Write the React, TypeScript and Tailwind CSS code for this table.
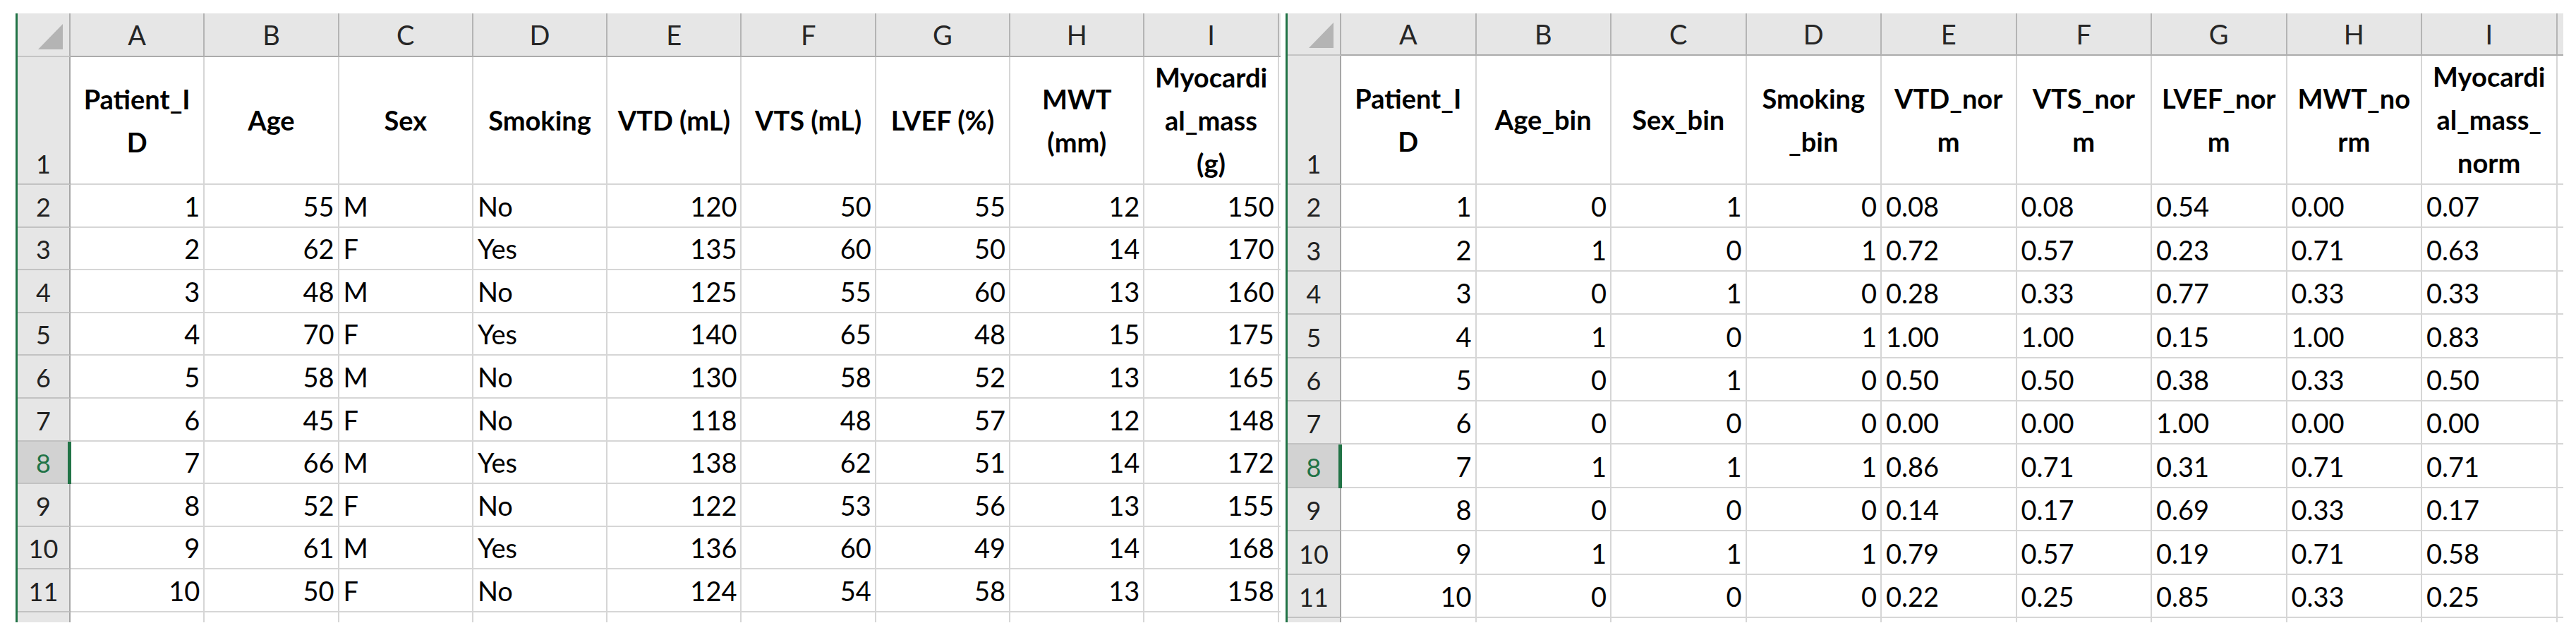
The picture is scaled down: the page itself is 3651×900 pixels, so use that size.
import React from "react";

type Align = "l" | "r";

interface PanelCfg {
  letters: string[];
  headers: string[][];
  aligns: Align[];
  rows: string[][];
  panelClass: string;
  rhW: string;
  colW: string;
  headH: string;
  row1H: string;
  rowH: string;
}

const letters = ["A", "B", "C", "D", "E", "F", "G", "H", "I"];

const leftRows: string[][] = [
  ["1", "55", "M", "No", "120", "50", "55", "12", "150"],
  ["2", "62", "F", "Yes", "135", "60", "50", "14", "170"],
  ["3", "48", "M", "No", "125", "55", "60", "13", "160"],
  ["4", "70", "F", "Yes", "140", "65", "48", "15", "175"],
  ["5", "58", "M", "No", "130", "58", "52", "13", "165"],
  ["6", "45", "F", "No", "118", "48", "57", "12", "148"],
  ["7", "66", "M", "Yes", "138", "62", "51", "14", "172"],
  ["8", "52", "F", "No", "122", "53", "56", "13", "155"],
  ["9", "61", "M", "Yes", "136", "60", "49", "14", "168"],
  ["10", "50", "F", "No", "124", "54", "58", "13", "158"],
];

const rightRows: string[][] = [
  ["1", "0", "1", "0", "0.08", "0.08", "0.54", "0.00", "0.07"],
  ["2", "1", "0", "1", "0.72", "0.57", "0.23", "0.71", "0.63"],
  ["3", "0", "1", "0", "0.28", "0.33", "0.77", "0.33", "0.33"],
  ["4", "1", "0", "1", "1.00", "1.00", "0.15", "1.00", "0.83"],
  ["5", "0", "1", "0", "0.50", "0.50", "0.38", "0.33", "0.50"],
  ["6", "0", "0", "0", "0.00", "0.00", "1.00", "0.00", "0.00"],
  ["7", "1", "1", "1", "0.86", "0.71", "0.31", "0.71", "0.71"],
  ["8", "0", "0", "0", "0.14", "0.17", "0.69", "0.33", "0.17"],
  ["9", "1", "1", "1", "0.79", "0.57", "0.19", "0.71", "0.58"],
  ["10", "0", "0", "0", "0.22", "0.25", "0.85", "0.33", "0.25"],
];

const leftCfg: PanelCfg = {
  letters,
  headers: [
    ["Patient_I", "D"],
    ["Age"],
    ["Sex"],
    ["Smoking"],
    ["VTD (mL)"],
    ["VTS (mL)"],
    ["LVEF (%)"],
    ["MWT", "(mm)"],
    ["Myocardi", "al_mass", "(g)"],
  ],
  aligns: ["r", "r", "l", "l", "r", "r", "r", "r", "r"],
  rows: leftRows,
  panelClass: "ml-[22px] w-[1793px]",
  rhW: "w-[75px]",
  colW: "w-[190.3px]",
  headH: "h-[62px]",
  row1H: "h-[181px]",
  rowH: "h-[60.6px]",
};

const rightCfg: PanelCfg = {
  letters,
  headers: [
    ["Patient_I", "D"],
    ["Age_bin"],
    ["Sex_bin"],
    ["Smoking", "_bin"],
    ["VTD_nor", "m"],
    ["VTS_nor", "m"],
    ["LVEF_nor", "m"],
    ["MWT_no", "rm"],
    ["Myocardi", "al_mass_", "norm"],
  ],
  aligns: ["r", "r", "r", "r", "l", "l", "l", "l", "l"],
  rows: rightRows,
  panelClass: "ml-[7px] w-[1811px]",
  rhW: "w-[76px]",
  colW: "w-[191.5px]",
  headH: "h-[60px]",
  row1H: "h-[183px]",
  rowH: "h-[61.4px]",
};

function Corner() {
  return (
    <svg width="35" height="36" viewBox="0 0 35 36" className="block">
      <polygon points="0,36 35,36 35,0" fill="#b4b4b4" />
    </svg>
  );
}

function Panel({ cfg }: { cfg: PanelCfg }) {
  return (
    <div
      className={`${cfg.panelClass} h-[863px] shrink-0 border-l-[3px] border-[#217346] overflow-hidden flex flex-col bg-white`}
    >
      {/* column letters */}
      <div className={`flex ${cfg.headH} shrink-0`}>
        <div
          className={`${cfg.rhW} shrink-0 bg-[#e6e6e6] border-r-2 border-b-2 border-r-[#b0b0b0] border-b-[#c4c4c4] flex items-end justify-end pr-[9px] pb-[9px]`}
        >
          <Corner />
        </div>
        {cfg.letters.map((l) => (
          <div
            key={l}
            className={`${cfg.colW} shrink-0 bg-[#e6e6e6] border-r-2 border-b-2 border-r-[#b4b4b4] border-b-[#ababab] flex items-center justify-center text-[38px] leading-none text-[#262626]`}
          >
            {l}
          </div>
        ))}
        <div className="flex-1 bg-[#e6e6e6] border-b-2 border-[#ababab]" />
      </div>

      {/* row 1: headers */}
      <div className={`flex ${cfg.row1H} shrink-0`}>
        <div
          className={`${cfg.rhW} shrink-0 bg-[#e6e6e6] border-r-2 border-b-2 border-r-[#a6a6a6] border-b-[#c2c2c2] flex items-end justify-center pb-[10px] text-[36px] leading-none text-[#222]`}
        >
          1
        </div>
        {cfg.headers.map((lines, i) => (
          <div
            key={i}
            className={`${cfg.colW} shrink-0 border-r-2 border-b-2 border-[#d6d6d6] flex flex-col items-center justify-center font-bold text-[38px] text-black`}
          >
            {lines.map((t, j) => (
              <div key={j} className="leading-[61px] whitespace-nowrap">
                {t}
              </div>
            ))}
          </div>
        ))}
        <div className="flex-1 border-b-2 border-[#d6d6d6]" />
      </div>

      {/* data rows */}
      {cfg.rows.map((row, r) => {
        const sel = r === 6;
        return (
          <div key={r} className={`flex ${cfg.rowH} shrink-0`}>
            <div
              className={`${cfg.rhW} shrink-0 relative border-r-2 border-b-2 border-r-[#a6a6a6] border-b-[#c2c2c2] flex items-end justify-center pb-[10px] text-[36px] leading-none ${
                sel ? "bg-[#d2d2d2] text-[#217346]" : "bg-[#e6e6e6] text-[#222]"
              }`}
            >
              {r + 2}
              {sel && (
                <div className="absolute right-[-3px] top-0 bottom-[-2px] w-[5px] bg-[#217346]" />
              )}
            </div>
            {row.map((v, c) => (
              <div
                key={c}
                className={`${cfg.colW} shrink-0 border-r-2 border-b-2 border-[#d6d6d6] flex items-end pb-[10px] text-[38px] leading-none text-black whitespace-nowrap ${
                  cfg.aligns[c] === "r" ? "justify-end pr-[5px]" : "justify-start pl-[6px]"
                }`}
              >
                {v}
              </div>
            ))}
            <div className="flex-1 border-b-2 border-[#d6d6d6]" />
          </div>
        );
      })}

      {/* partial row 12 */}
      <div className="flex flex-1">
        <div className={`${cfg.rhW} shrink-0 bg-[#e6e6e6] border-r-2 border-[#a6a6a6]`} />
        {cfg.letters.map((l) => (
          <div key={l} className={`${cfg.colW} shrink-0 border-r-2 border-[#d6d6d6]`} />
        ))}
        <div className="flex-1" />
      </div>
    </div>
  );
}

export default function App() {
  return (
    <div className="w-[3651px] h-[900px] bg-white flex items-start pt-[19px] font-['Lato','Carlito','Liberation_Sans',sans-serif]">
      <Panel cfg={leftCfg} />
      <Panel cfg={rightCfg} />
    </div>
  );
}
